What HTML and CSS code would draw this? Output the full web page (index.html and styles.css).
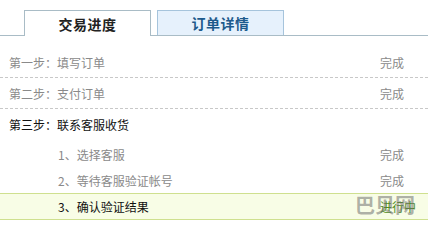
FILE: index.html
```html
<!DOCTYPE html>
<html lang="zh">
<head>
<meta charset="utf-8">
<link rel="stylesheet" href="styles.css">
</head>
<body>
<div class="panel">
  <div class="tabs">
    <div class="tab active">交易进度</div>
    <div class="tab other">订单详情</div>
  </div>
  <div class="steps">
    <div class="row step done dashed"><span>第一步：填写订单</span><span class="st">完成</span></div>
    <div class="row step done dashed"><span>第二步：支付订单</span><span class="st">完成</span></div>
    <div class="row step cur"><span>第三步：联系客服收货</span><span class="st"></span></div>
    <div class="row sub done"><span>1、选择客服</span><span class="st">完成</span></div>
    <div class="row sub done"><span>2、等待客服验证帐号</span><span class="st">完成</span></div>
    <div class="row sub active-row"><span>3、确认验证结果</span><span class="st go">进行中</span><span class="mark">巴贝网</span></div>
    <div class="row sub"><span>4、买家确认收货</span><span class="st">待处理</span></div>
  </div>
</div>
</body>
</html>
```
FILE: styles.css
```css
html, body { margin: 0; padding: 0; background: #fff; }
body { font-family: "Noto Sans CJK SC", "DejaVu Sans", sans-serif; font-size: 12px; color: #222; width: 428px; height: 227px; overflow: hidden; }
.tabs { display: flex; padding: 10px 0 0 24px; height: 25px; border-bottom: 1px solid #a9bcc6; gap: 6px; }
.tab { box-sizing: border-box; width: 127px; height: 26px; border: 1px solid #a9bcc6; border-bottom: none; display: flex; align-items: center; justify-content: center; font-size: 14px; font-weight: bold; letter-spacing: 0.5px; }
.tab.active { background: #fff; color: #222; }
.tab.other { background: #e6f1fc; border-color: #a6c4dc; color: #1d5a8c; height: 25px; }
.steps { padding-top: 11px; }
.row { display: grid; grid-template-columns: 1fr 48px; align-items: center; padding-left: 9px; position: relative; }
.step { height: 30px; }
.dashed { border-bottom: 1px dashed #c8c8c8; }
.done { color: #8a8a8a; }
.cur { color: #111; }
.sub { height: 26px; padding-left: 58px; }
.sub:nth-of-type(4) { margin-top: 2px; }
.st { color: #8a8a8a; }
.active-row { background: #f8fde6; border-top: 1px solid #cfe08f; border-bottom: 1px solid #cfe08f; height: 25px; color: #111; }
.go { color: #4e8c1a; }
.mark { position: absolute; left: 355px; top: -1px; font-size: 20px; font-weight: bold; color: rgba(110,110,110,0.55); line-height: 24px; }
```
